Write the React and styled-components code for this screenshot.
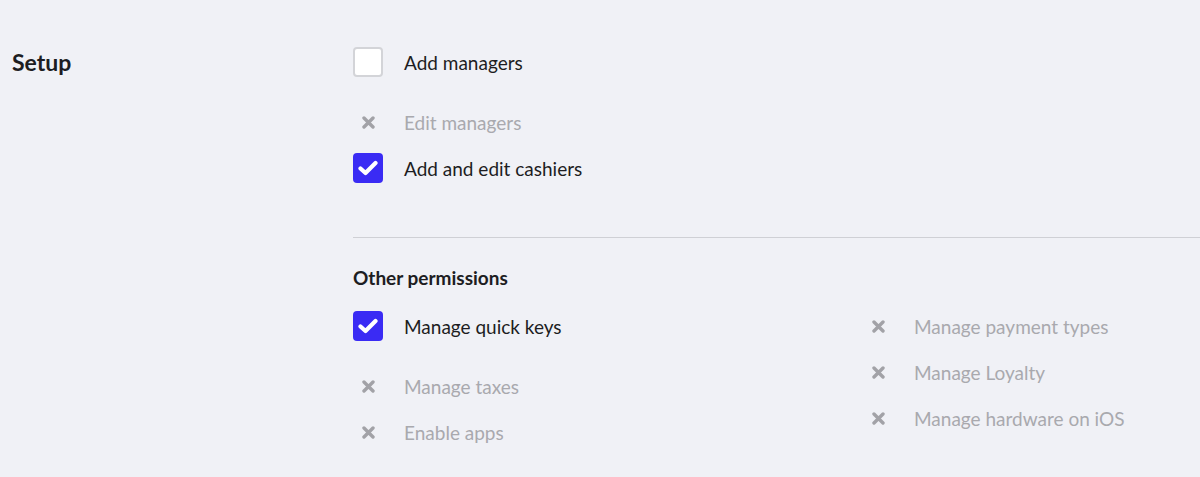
import React from 'react';
import styled, { createGlobalStyle } from 'styled-components';

const GlobalStyle = createGlobalStyle`
  html, body {
    margin: 0;
    padding: 0;
    background: #f0f1f6;
    font-family: Lato, "Open Sans", sans-serif;
    color: #1d1d22;
    overflow: hidden;
  }
`;

const Page = styled.div`
  width: 1200px;
  height: 477px;
  display: grid;
  grid-template-columns: 353px 1fr;
  padding-top: 47px;
  box-sizing: border-box;
`;

const SectionTitle = styled.h2`
  margin: 0;
  padding-left: 12px;
  font-size: 23px;
  font-weight: 700;
  line-height: 30px;
`;

const Content = styled.div`
  display: flex;
  flex-direction: column;
`;

const List = styled.div`
  display: flex;
  flex-direction: column;
  gap: 16px;
`;

const Divider = styled.hr`
  margin: 54px 0 0;
  border: 0;
  border-top: 1px solid #cfd0d5;
  width: 900px;
`;

const SubTitle = styled.h3`
  margin: 28px 0 21px;
  font-size: 19px;
  font-weight: 700;
  line-height: 24px;
`;

const Columns = styled.div`
  display: grid;
  grid-template-columns: 510px 1fr;
`;

const Row = styled.label`
  display: flex;
  align-items: center;
  gap: 21px;
  height: 30px;
  margin-top: ${p => (p.$spaced ? '14px' : '0')};
  font-size: 19px;
  color: ${p => (p.$disabled ? '#a9a9ae' : '#1d1d22')};
`;

const Box = styled.span`
  width: 30px;
  height: 30px;
  box-sizing: border-box;
  border-radius: 4px;
  flex-shrink: 0;
  display: flex;
  align-items: center;
  justify-content: center;
  background: ${p => (p.$checked ? '#3a2bf4' : '#ffffff')};
  border: ${p => (p.$checked ? 'none' : '2px solid #d3d4d8')};
`;

const Cross = styled.span`
  width: 30px;
  height: 30px;
  flex-shrink: 0;
  display: flex;
  align-items: center;
  justify-content: center;
`;

const CheckIcon = () => (
  <svg width="20" height="16" viewBox="0 0 20 16">
    <path d="M2.5 8.5 L7.5 13 L17.5 3" fill="none" stroke="#fff" strokeWidth="4.2" strokeLinecap="round" strokeLinejoin="round" />
  </svg>
);

const CrossIcon = () => (
  <svg width="13" height="13" viewBox="0 0 13 13">
    <path d="M2 2 L11 11 M11 2 L2 11" stroke="#a2a2a7" strokeWidth="3.4" strokeLinecap="round" />
  </svg>
);

const Permission = ({ state, label, spaced }) => (
  <Row $disabled={state === 'off'} $spaced={spaced}>
    {state === 'off' ? (
      <Cross><CrossIcon /></Cross>
    ) : (
      <Box $checked={state === 'checked'}>{state === 'checked' && <CheckIcon />}</Box>
    )}
    {label}
  </Row>
);

export default function App() {
  return (
    <>
      <GlobalStyle />
      <Page>
        <SectionTitle>Setup</SectionTitle>
        <Content>
          <List>
            <Permission state="empty" label="Add managers" />
            <Permission state="off" label="Edit managers" spaced />
            <Permission state="checked" label="Add and edit cashiers" />
          </List>
          <Divider />
          <SubTitle>Other permissions</SubTitle>
          <Columns>
            <List>
              <Permission state="checked" label="Manage quick keys" />
              <Permission state="off" label="Manage taxes" spaced />
              <Permission state="off" label="Enable apps" />
            </List>
            <List>
              <Permission state="off" label="Manage payment types" />
              <Permission state="off" label="Manage Loyalty" />
              <Permission state="off" label="Manage hardware on iOS" />
            </List>
          </Columns>
        </Content>
      </Page>
    </>
  );
}
